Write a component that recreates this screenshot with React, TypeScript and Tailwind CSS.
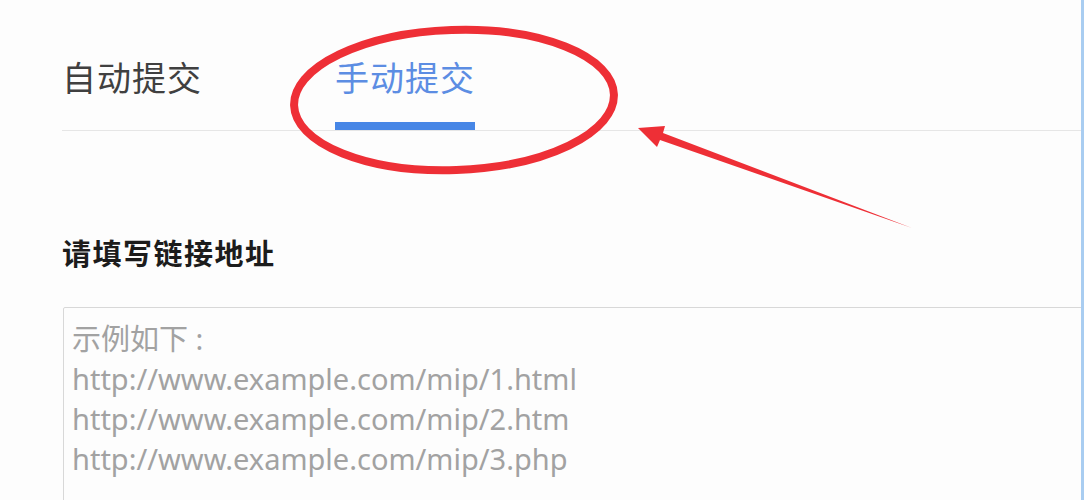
import { useState } from "react";

const tabs = ["自动提交", "手动提交"];

const placeholder = [
  "示例如下 :",
  "http://www.example.com/mip/1.html",
  "http://www.example.com/mip/2.htm",
  "http://www.example.com/mip/3.php",
].join("\n");

export default function App() {
  const [active, setActive] = useState(1);
  const [urls, setUrls] = useState("");

  return (
    <div className="relative flex h-[500px] w-full overflow-hidden bg-[#fdfdfd] font-['Noto_Sans','Noto_Sans_CJK_SC',sans-serif]">
      <div className="min-w-0 flex-1 overflow-hidden pl-[62px]">
        {/* 标签栏 */}
        <div className="flex gap-[133px] border-b border-[#e6e6e6] pt-[60px]">
          {tabs.map((tab, i) => (
            <button
              key={tab}
              onClick={() => setActive(i)}
              className="flex flex-col items-stretch"
            >
              <span
                className={`text-[34px] leading-[34px] tracking-[1px] font-['Noto_Sans_CJK_SC',sans-serif] ${
                  active === i ? "text-[#5c8de3]" : "text-[#404040]"
                }`}
              >
                {tab}
              </span>
              <span
                className={`mt-[28px] h-[8px] ${
                  active === i ? "bg-[#4786e6]" : "bg-transparent"
                }`}
              />
            </button>
          ))}
        </div>

        {/* 链接地址 */}
        <h2 className="mt-[107px] text-[29px] leading-[29px] font-bold tracking-[1.5px] text-[#1c1c1c] font-['Noto_Sans_CJK_SC',sans-serif]">
          请填写链接地址
        </h2>
        <textarea
          value={urls}
          onChange={(e) => setUrls(e.target.value)}
          placeholder={placeholder}
          className="ml-px mt-[40px] block h-[240px] w-[1040px] resize-none rounded-[2px] border border-[#d8d8d8] bg-[#fdfdfd] px-[8px] pt-[11px] text-[29px] leading-[40px] text-[#555] outline-none placeholder:text-[#a2a2a2]"
        />
      </div>

      {/* 右侧窗口边 */}
      <div className="w-[3px] shrink-0 bg-[#a9cdf1]" />

      {/* 红色标注 */}
      <svg
        className="pointer-events-none absolute inset-0"
        width="1084"
        height="500"
        viewBox="0 0 1084 500"
      >
        <ellipse
          cx="454"
          cy="100"
          rx="160"
          ry="70"
          transform="rotate(-2 454 100)"
          fill="none"
          stroke="#ee2f36"
          strokeWidth="8"
        />
        <polygon
          points="638,128 665,126 663,133 912,228 660,140 657,147"
          fill="#ee2f36"
        />
      </svg>
    </div>
  );
}
